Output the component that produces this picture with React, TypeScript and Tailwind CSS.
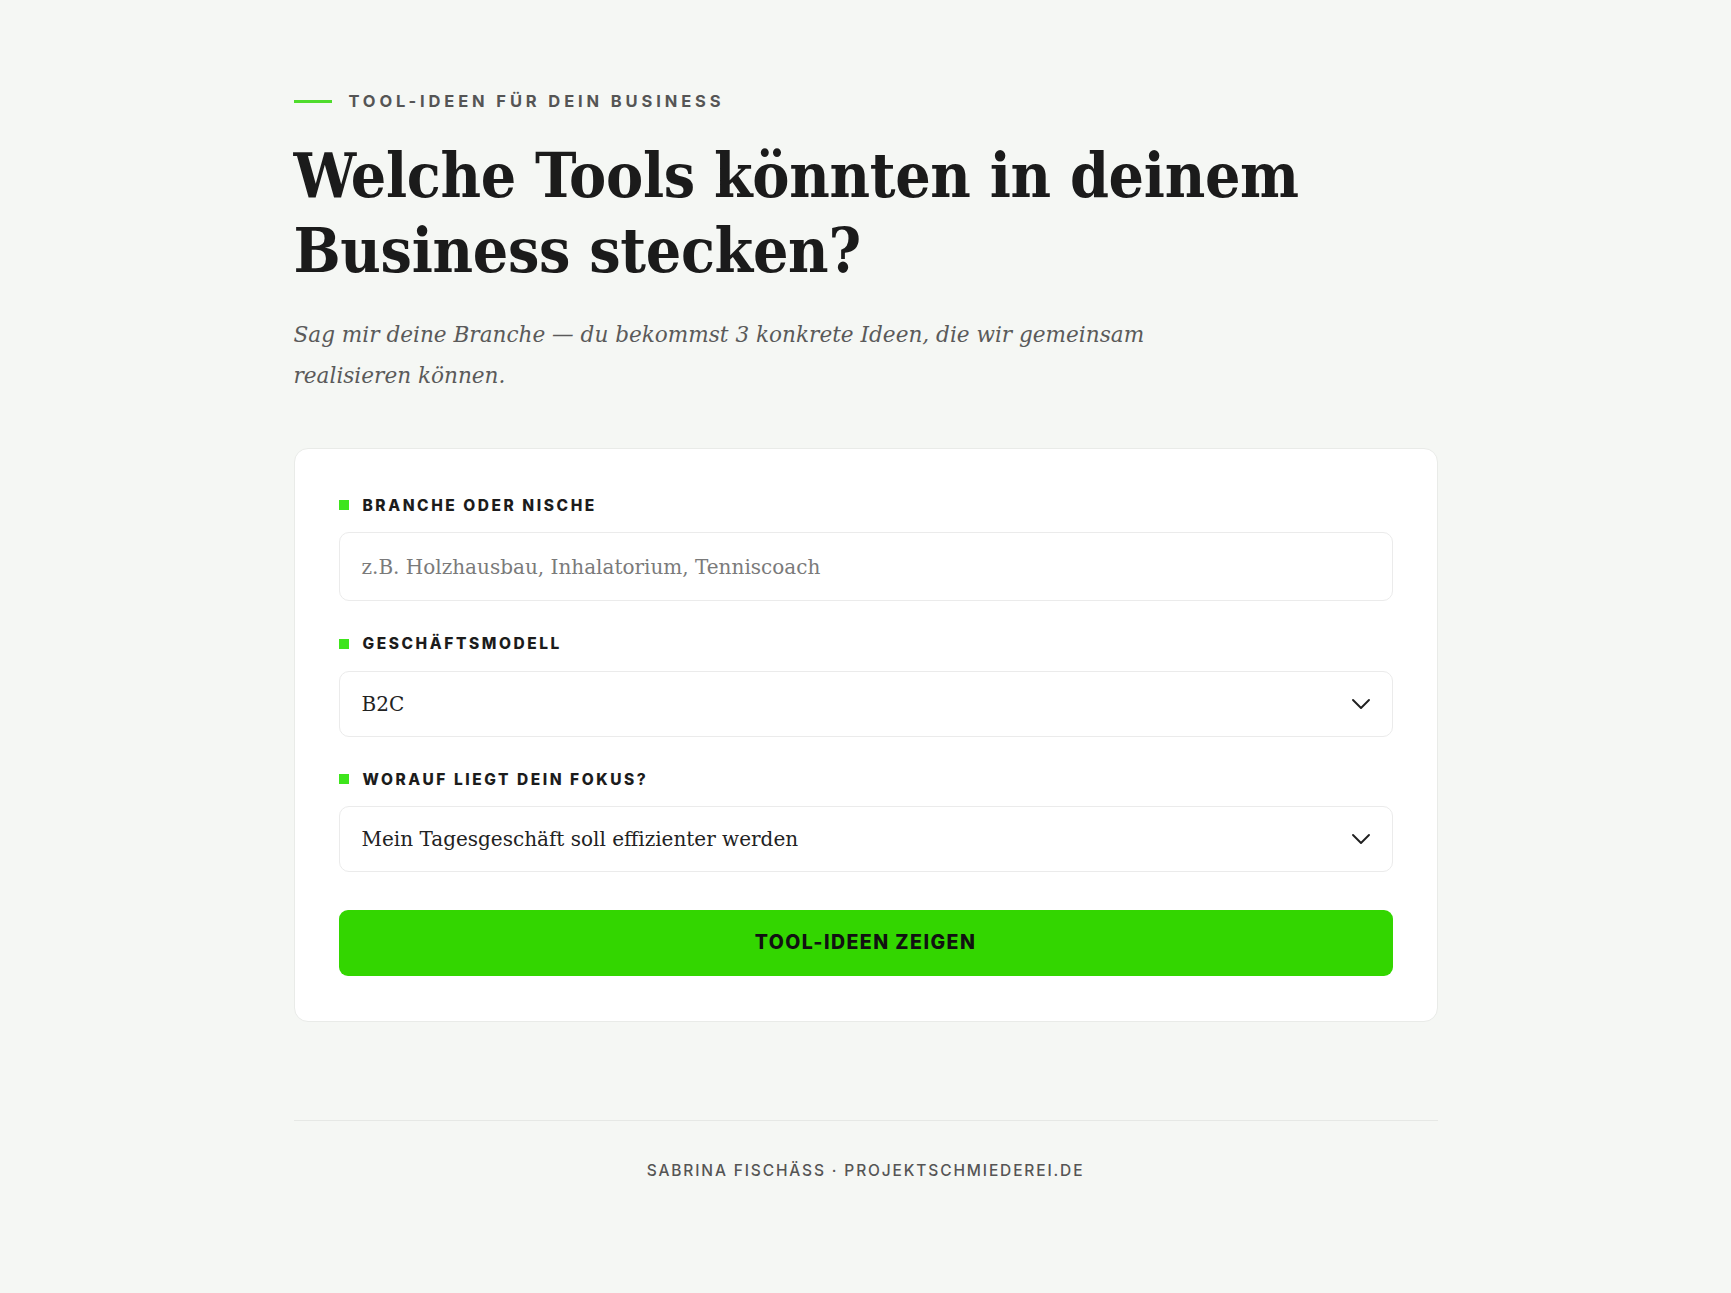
import React from "react";

const serif = "font-['DejaVu_Serif','Liberation_Serif',serif]";
const serifCond = "font-['DejaVu_Serif_Condensed','DejaVu_Serif','Liberation_Serif',serif]";
const sans = "font-['Inter','Liberation_Sans',sans-serif]";

function Chevron() {
  return (
    <svg width="20" height="12" viewBox="0 0 20 12" fill="none" className="shrink-0">
      <path d="M2 2l8 8 8-8" stroke="#1f1f1f" strokeWidth="1.9" strokeLinecap="round" strokeLinejoin="round" />
    </svg>
  );
}

function Label({ children }: { children: React.ReactNode }) {
  return (
    <div className="flex items-center gap-[14px] mb-[19px]">
      <span className="w-[10px] h-[10px] bg-[#3ee51c] shrink-0" />
      <span className={`${sans} text-[15.5px] font-extrabold tracking-[0.165em] text-[#1c1c1c] uppercase leading-none`}>
        {children}
      </span>
    </div>
  );
}

function SelectBox({ value }: { value: string }) {
  return (
    <div className="flex items-center justify-between h-[66px] pl-[22px] pr-[21px] border border-[#ebebeb] rounded-[10px] bg-white">
      <span className={`${serif} text-[20px] text-[#222]`}>{value}</span>
      <Chevron />
    </div>
  );
}

export default function App() {
  return (
    <div className="min-h-[1293px] bg-[#f5f7f4] w-full">
      <div className="max-w-[1144px] mx-auto pt-[93px]">
        <div className="flex items-center gap-[17px]">
          <span className="w-[38px] h-[3px] bg-[#4fdc2c]" />
          <span className={`${sans} text-[16.5px] font-bold tracking-[0.235em] text-[#555] leading-none`}>
            TOOL-IDEEN FÜR DEIN BUSINESS
          </span>
        </div>
        <h1 className={`${serifCond} mt-[28px] text-[62px] font-bold leading-[75px] text-[#1b1b1b] tracking-[-0.005em] whitespace-nowrap`}>
          Welche Tools könnten in deinem
          <br />
          Business stecken?
        </h1>
        <p className={`${serif} italic mt-[26px] text-[21.6px] leading-[41px] text-[#5a5a5a] max-w-[880px]`}>
          Sag mir deine Branche — du bekommst 3 konkrete Ideen, die wir gemeinsam realisieren können.
        </p>

        <div className="mt-[52px] bg-white border border-[#e9ebe8] rounded-[14px] px-[44px] pt-[49px] pb-[45px]">
          <Label>BRANCHE ODER NISCHE</Label>
          <div className="flex items-center h-[69px] px-[22px] border border-[#ebebeb] rounded-[10px] bg-white">
            <span className={`${serif} text-[20px] text-[#7a7a7a]`}>z.B. Holzhausbau, Inhalatorium, Tenniscoach</span>
          </div>

          <div className="mt-[35px]">
            <Label>GESCHÄFTSMODELL</Label>
            <SelectBox value="B2C" />
          </div>

          <div className="mt-[35px]">
            <Label>WORAUF LIEGT DEIN FOKUS?</Label>
            <SelectBox value="Mein Tagesgeschäft soll effizienter werden" />
          </div>

          <div className="mt-[38px] h-[66px] rounded-[9px] bg-[#33d600] flex items-center justify-center">
            <span className={`${sans} text-[19.5px] font-extrabold tracking-[0.075em] text-[#111]`}>TOOL-IDEEN ZEIGEN</span>
          </div>
        </div>

        <div className="mt-[98px] border-t border-[#e6e8e5] pt-[38px] flex justify-center">
          <span className={`${sans} text-[15.5px] font-medium tracking-[0.12em] text-[#555]`}>
            SABRINA FISCHÄSS · PROJEKTSCHMIEDEREI.DE
          </span>
        </div>
      </div>
    </div>
  );
}
